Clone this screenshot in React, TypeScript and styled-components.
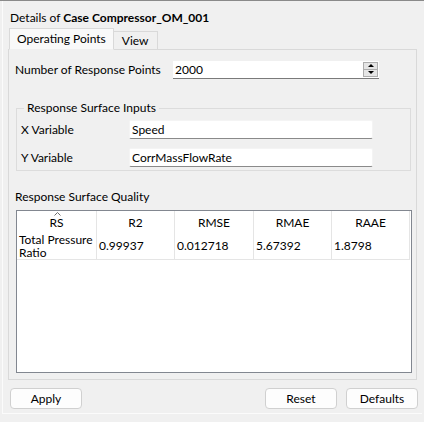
import styled, { createGlobalStyle } from 'styled-components';

const GlobalStyle = createGlobalStyle`
  html, body {
    margin: 0;
    padding: 0;
    background: #f0f0f0;
  }
  body {
    font-family: Lato, "Liberation Sans", Arial, sans-serif;
    font-size: 12px;
    color: #000;
  }
`;

const Window = styled.div`
  width: 424px;
  height: 422px;
  box-sizing: border-box;
  border-top: 1px solid #8a8a8a;
  background: #f0f0f0;
  overflow: hidden;
`;

const Frame = styled.div`
  margin-left: 2px;
  width: 420px;
  height: 413px;
  box-sizing: border-box;
  border-left: 1px solid #fbfbfb;
  border-bottom: 1px solid #fbfbfb;
  display: flex;
  flex-direction: column;
`;

const Title = styled.div`
  margin: 9px 0 0 7px;
  height: 16px;
  line-height: 16px;
  white-space: nowrap;

  b {
    font-weight: 700;
  }
`;

const TabBar = styled.div`
  display: flex;
  align-items: flex-end;
  margin: 2px 0 0 6px;
  height: 21px;
  position: relative;
  z-index: 1;
`;

const Tab = styled.div<{ $active?: boolean }>`
  box-sizing: border-box;
  height: ${(p) => (p.$active ? '22px' : '18px')};
  padding: 0 ${(p) => (p.$active ? '7px' : '8px')};
  line-height: ${(p) => (p.$active ? '20px' : '17px')};
  background: ${(p) => (p.$active ? '#f9f9f9' : '#f0f0f0')};
  border: 1px solid #d9d9d9;
  border-bottom: ${(p) => (p.$active ? '1px solid #f0f0f0' : 'none')};
  border-left: ${(p) => (p.$active ? '1px solid #d9d9d9' : 'none')};
  margin-bottom: ${(p) => (p.$active ? '-1px' : '0')};
  white-space: nowrap;
`;

const Panel = styled.div`
  margin-left: 5px;
  width: 409px;
  height: 331px;
  box-sizing: border-box;
  border: 1px solid #d9d9d9;
  padding: 10px 6px 0 6px;
  display: flex;
  flex-direction: column;
`;

const FieldRow = styled.div<{ $labelWidth: number }>`
  display: flex;
  align-items: center;
  height: 19px;

  & > label {
    width: ${(p) => p.$labelWidth}px;
    flex: none;
  }
`;

const SpinBox = styled.div`
  display: flex;
  align-items: center;
  width: 206px;
  height: 18px;
  background: #fff;
  border-bottom: 1px solid #7a7a7a;
  padding-left: 2px;
  box-sizing: border-box;
`;

const SpinValue = styled.span`
  flex: 1;
`;

const SpinButtons = styled.div`
  display: flex;
  flex-direction: column;
  width: 15px;
  height: 15px;
  margin-right: 1px;
  box-sizing: border-box;
  border: 1px solid #adadad;
  background: #e5e5e5;
`;

const SpinArrow = styled.div<{ $down?: boolean }>`
  flex: 1;
  display: flex;
  align-items: center;
  justify-content: center;
  border-top: ${(p) => (p.$down ? '1px solid #adadad' : 'none')};

  &::after {
    content: '';
    width: 0;
    height: 0;
    border-left: 3px solid transparent;
    border-right: 3px solid transparent;
    ${(p) =>
      p.$down
        ? 'border-top: 3px solid #000;'
        : 'border-bottom: 3px solid #000;'}
  }
`;

const GroupBox = styled.fieldset`
  margin: 22px 0 0 1px;
  width: 395px;
  height: 70px;
  box-sizing: border-box;
  border: 1px solid #dcdcdc;
  padding: 5px 0 0 4px;
  display: flex;
  flex-direction: column;
  gap: 9px;

  legend {
    padding: 0 3px;
    margin-left: 3px;
    line-height: 14px;
  }
`;

const TextField = styled.div`
  width: 244px;
  height: 19px;
  box-sizing: border-box;
  background: #fff;
  border: 1px solid #f4f4f4;
  border-bottom: 1px solid #8a8a8a;
  border-radius: 2px;
  padding-left: 2px;
  line-height: 17px;
`;

const SectionLabel = styled.div`
  margin-top: 19px;
  line-height: 14px;
`;

const Table = styled.div`
  margin: 6px 0 0 1px;
  width: 396px;
  height: 163px;
  box-sizing: border-box;
  border: 1px solid #828790;
  background: #fff;
`;

const Grid = styled.div`
  display: grid;
  grid-template-columns: 80px 78px 79px 78px 78px;
`;

const HeaderCell = styled.div`
  position: relative;
  height: 21px;
  line-height: 23px;
  text-align: center;
  border-right: 1px solid #e5e5e5;

  &:last-child {
    border-right: none;
  }
`;

const SortMark = styled.svg`
  position: absolute;
  left: 50%;
  top: 1px;
  margin-left: -3px;
  width: 7px;
  height: 4px;
`;

const Cell = styled.div`
  height: 28px;
  box-sizing: border-box;
  padding: 0 2px 0 2px;
  display: flex;
  align-items: center;
  line-height: 13px;
  border-right: 1px solid #e5e5e5;
  border-bottom: 1px solid #e5e5e5;
`;

const ButtonBar = styled.div`
  display: flex;
  gap: 9px;
  margin: 8px 0 0 7px;
  width: 408px;
`;

const Button = styled.button<{ $push?: boolean }>`
  width: 72px;
  height: 21px;
  box-sizing: border-box;
  background: #fdfdfd;
  border: 1px solid #d0d0d0;
  border-radius: 4px;
  font: inherit;
  color: #000;
  padding: 0;
  ${(p) => (p.$push ? 'margin-left: auto;' : '')}
`;

const headers = ['RS', 'R2', 'RMSE', 'RMAE', 'RAAE'];
const values = ['Total Pressure Ratio', '0.99937', '0.012718', '5.67392', '1.8798'];

export default function App() {
  return (
    <>
      <GlobalStyle />
      <Window>
        <Frame>
          <Title>
            Details of <b>Case Compressor_OM_001</b>
          </Title>
          <TabBar>
            <Tab $active>Operating Points</Tab>
            <Tab>View</Tab>
          </TabBar>
          <Panel>
            <FieldRow $labelWidth={158}>
              <label>Number of Response Points</label>
              <SpinBox>
                <SpinValue>2000</SpinValue>
                <SpinButtons>
                  <SpinArrow />
                  <SpinArrow $down />
                </SpinButtons>
              </SpinBox>
            </FieldRow>
            <GroupBox>
              <legend>Response Surface Inputs</legend>
              <FieldRow $labelWidth={108}>
                <label>X Variable</label>
                <TextField>Speed</TextField>
              </FieldRow>
              <FieldRow $labelWidth={108}>
                <label>Y Variable</label>
                <TextField>CorrMassFlowRate</TextField>
              </FieldRow>
            </GroupBox>
            <SectionLabel>Response Surface Quality</SectionLabel>
            <Table>
              <Grid>
                {headers.map((h, i) => (
                  <HeaderCell key={h}>
                    {i === 0 && (
                      <SortMark viewBox="0 0 7 4">
                        <path d="M0.5 3.5 L3.5 0.5 L6.5 3.5" fill="none" stroke="#6d6d6d" strokeWidth="1" />
                      </SortMark>
                    )}
                    {h}
                  </HeaderCell>
                ))}
                {values.map((v) => (
                  <Cell key={v}>{v}</Cell>
                ))}
              </Grid>
            </Table>
          </Panel>
          <ButtonBar>
            <Button>Apply</Button>
            <Button $push>Reset</Button>
            <Button>Defaults</Button>
          </ButtonBar>
        </Frame>
      </Window>
    </>
  );
}
